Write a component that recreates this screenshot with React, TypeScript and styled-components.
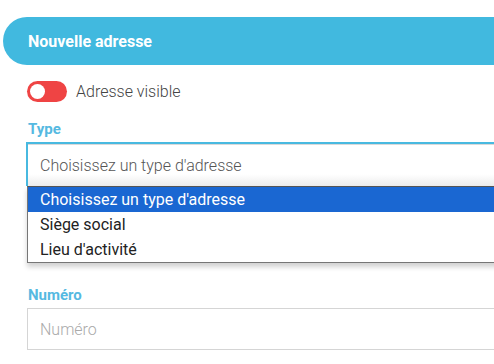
import React, { useState } from 'react'
import styled, { createGlobalStyle } from 'styled-components'

const GlobalStyle = createGlobalStyle`
  html, body {
    margin: 0;
    padding: 0;
    background: #ffffff;
    overflow: hidden;
  }
  body {
    font-family: Roboto, 'Liberation Sans', sans-serif;
  }
`

const options = ["Choisissez un type d'adresse", 'Siège social', "Lieu d'activité"]

export default function App() {
  const [visible, setVisible] = useState(false)
  const [selected] = useState(0)

  return (
    <>
      <GlobalStyle />
      <Page>
        <Header>Nouvelle adresse</Header>
        <Body>
          <ToggleRow>
            <Switch $on={visible} onClick={() => setVisible(!visible)}>
              <Knob />
            </Switch>
            <ToggleLabel>Adresse visible</ToggleLabel>
          </ToggleRow>

          <Field>
            <Label>Type</Label>
            <SelectWrap>
              <SelectBox>Choisissez un type d'adresse</SelectBox>
              <Menu>
                {options.map((o, i) => (
                  <MenuItem key={o} $active={i === selected}>
                    {o}
                  </MenuItem>
                ))}
              </Menu>
            </SelectWrap>
          </Field>

          <Field $gap={101}>
            <Label>Numéro</Label>
            <Input placeholder="Numéro" />
          </Field>
        </Body>
      </Page>
    </>
  )
}

const Page = styled.div`
  width: 620px;
  padding: 17px 0 0 3px;
`
const Header = styled.div`
  height: 48px;
  display: flex;
  align-items: center;
  padding-left: 25px;
  background-color: #41b9df;
  border-radius: 24px 0 0 24px;
  color: #ffffff;
  font-size: 16px;
  font-weight: 700;
`
const Body = styled.div`
  padding-left: 23px;
`
const ToggleRow = styled.div`
  display: flex;
  align-items: center;
  gap: 9px;
  margin-top: 16px;
  padding-left: 1px;
`
const Switch = styled.div<{ $on: boolean }>`
  width: 40px;
  height: 21px;
  border-radius: 11px;
  background-color: ${(p) => (p.$on ? '#41b9df' : '#ef4444')};
  display: flex;
  align-items: center;
  padding: 0 3px;
  box-sizing: border-box;
  justify-content: ${(p) => (p.$on ? 'flex-end' : 'flex-start')};
  cursor: pointer;
`
const Knob = styled.div`
  width: 15px;
  height: 15px;
  border-radius: 50%;
  background: #ffffff;
`
const ToggleLabel = styled.span`
  font-size: 16px;
  font-weight: 300;
  color: #444444;
`
const Field = styled.div<{ $gap?: number }>`
  margin-top: ${(p) => p.$gap ?? 19}px;
  display: flex;
  flex-direction: column;
`
const Label = styled.label`
  font-size: 15px;
  line-height: 17px;
  font-weight: 700;
  color: #55b9e1;
  padding-left: 2px;
  margin-bottom: 4px;
`
const SelectWrap = styled.div`
  position: relative;
`
const SelectBox = styled.div`
  height: 44px;
  box-sizing: border-box;
  display: flex;
  align-items: center;
  padding-left: 12px;
  border-top: 2px solid #48b9e0;
  border-left: 2px solid #48b9e0;
  box-shadow: inset 0 1px 0 #d9d9d9;
  background: linear-gradient(to bottom, #ffffff 0%, #ffffff 72%, #ececec 100%);
  font-size: 16px;
  font-weight: 300;
  color: #555555;
`
const Menu = styled.div`
  position: absolute;
  top: 44px;
  left: 1px;
  right: 0;
  background: #ffffff;
  border: 1px solid #767676;
  border-top-color: #555555;
  box-shadow: 0 4px 5px rgba(0, 0, 0, 0.18);
`
const MenuItem = styled.div<{ $active: boolean }>`
  height: 25px;
  line-height: 25px;
  padding-left: 12px;
  font-size: 16px;
  color: ${(p) => (p.$active ? '#ffffff' : '#222222')};
  background-color: ${(p) => (p.$active ? '#1a67d2' : 'transparent')};
`
const Input = styled.input`
  height: 42px;
  box-sizing: border-box;
  border: 1px solid #d5d5d5;
  margin-left: 1px;
  padding: 0 12px;
  font-family: Roboto, 'Liberation Sans', sans-serif;
  font-size: 16px;
  font-weight: 300;
  outline: none;
  &::placeholder {
    color: #aaaaaa;
  }
`
